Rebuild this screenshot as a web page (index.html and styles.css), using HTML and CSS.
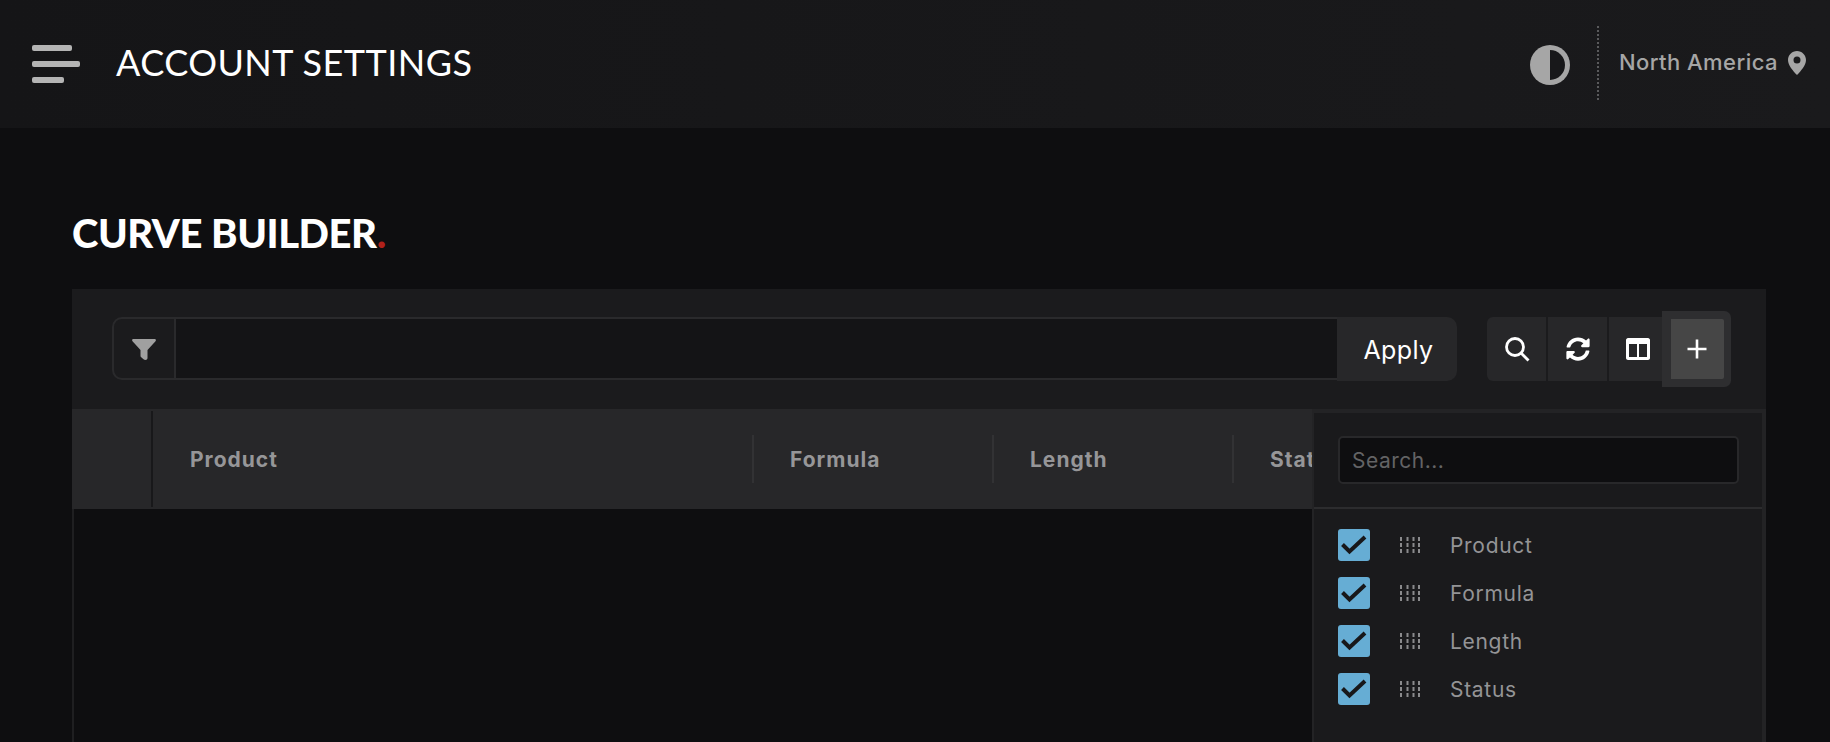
FILE: index.html
```html
<!DOCTYPE html>
<html lang="en">
<head>
    <meta charset="UTF-8">
    <title>Curve Builder</title>
    <link rel="stylesheet" href="styles.css">
</head>
<body>
    <svg class="defs" width="0" height="0">
        <symbol id="grip" viewBox="0 0 20 16">
            <path d="M1 0V16M7.5 0V16M13.5 0V16M19 0V16" stroke="#8a8a8c" stroke-width="2" stroke-dasharray="4 2" fill="none"/>
        </symbol>
        <symbol id="check" viewBox="0 0 32 32">
            <path d="M4.500 15.500L11.500 22.500L27 8" stroke="#18181a" stroke-width="4" fill="none"/>
        </symbol>
    </svg>

    <header class="topbar">
        <div class="topbar-left">
            <div class="menu-icon"><span></span><span></span><span></span></div>
            <div class="page-name">ACCOUNT SETTINGS</div>
        </div>
        <div class="topbar-right">
            <svg class="theme-icon" width="40" height="40" viewBox="0 0 40 40">
                <circle cx="20" cy="20" r="20" fill="#a6a6a6"/>
                <path d="M20 5A15 15 0 0 1 20 35Z" fill="#18181a"/>
            </svg>
            <div class="region">
                <span class="region-name">North America</span>
                <svg width="18" height="24" viewBox="0 0 18 24">
                    <path fill-rule="evenodd" fill="#a6a6a6" d="M9 0C4 0 0 4 0 9C0 14 5 20 9 24C13 20 18 14 18 9C18 4 14 0 9 0ZM9 5.500A3.500 3.500 0 1 1 9 12.500A3.500 3.500 0 1 1 9 5.500Z"/>
                </svg>
            </div>
        </div>
    </header>

    <main class="content">
        <h1 class="title">CURVE BUILDER<span class="dot">.</span></h1>

        <section class="card">
            <div class="toolbar">
                <div class="filter">
                    <div class="filter-icon">
                        <svg width="24" height="21" viewBox="0 0 24 21">
                            <path fill="#a0a0a0" d="M1.500 0H22.500C23.800 0 24.300 1.200 23.500 2.200L15.500 11V19C15.500 21 13 21.500 11.500 20.200L9.500 18.500C8.800 18 8.500 17.500 8.500 16.500V11L0.500 2.200C-0.300 1.200 0.200 0 1.500 0Z"/>
                        </svg>
                    </div>
                    <div class="filter-input"></div>
                    <button class="apply" type="button">Apply</button>
                </div>
                <div class="tools">
                    <button class="tool" type="button">
                        <svg width="26" height="26" viewBox="0 0 26 26">
                            <circle cx="11" cy="11" r="8.500" stroke="#fff" stroke-width="2.800" fill="none"/>
                            <path d="M17 17L24.500 24.500" stroke="#fff" stroke-width="2.800" fill="none"/>
                        </svg>
                    </button>
                    <button class="tool" type="button">
                        <svg width="24" height="24" viewBox="0 0 512 512">
                            <path fill="#fff" d="M370.72 133.28C339.458 104.008 298.888 87.962 255.848 88c-77.458.068-144.328 53.178-162.791 126.85-1.344 5.363-6.122 9.15-11.651 9.15H24.103c-7.498 0-13.194-6.807-11.807-14.176C33.933 94.924 134.813 8 256 8c66.448 0 126.791 26.136 171.315 68.685L463.03 40.97C478.149 25.851 504 36.559 504 57.941V192c0 13.255-10.745 24-24 24H345.941c-21.382 0-32.09-25.851-16.971-40.971l41.75-41.749zM32 296h134.059c21.382 0 32.09 25.851 16.971 40.971l-41.75 41.75c31.262 29.273 71.835 45.319 114.876 45.28 77.418-.07 144.315-53.144 162.787-126.849 1.344-5.363 6.122-9.15 11.651-9.150h57.304c7.498 0 13.194 6.807 11.807 14.176C478.067 417.076 377.187 504 256 504c-66.448 0-126.791-26.136-171.315-68.685L48.97 471.030C33.851 486.149 8 475.441 8 454.059V320c0-13.255 10.745-24 24-24z"/>
                        </svg>
                    </button>
                    <button class="tool tool-columns" type="button">
                        <svg width="24" height="22" viewBox="0 0 24 22">
                            <path fill-rule="evenodd" fill="#fff" d="M2 0H22C23 0 24 1 24 2V20C24 21 23 22 22 22H2C1 22 0 21 0 20V2C0 1 1 0 2 0ZM3 6V19H11V6ZM13 6V19H21V6Z"/>
                        </svg>
                    </button>
                    <button class="tool tool-active" type="button">
                        <svg width="20" height="20" viewBox="0 0 20 20">
                            <path d="M10 0.500V19.500M0.500 10H19.500" stroke="#fff" stroke-width="2.600" fill="none"/>
                        </svg>
                    </button>
                </div>
            </div>

            <div class="table">
                <div class="table-head">
                    <div class="col col-select"></div>
                    <div class="col col-product">Product</div>
                    <div class="col col-mid">Formula</div>
                    <div class="col col-mid">Length</div>
                    <div class="col col-mid">Status</div>
                </div>
                <div class="table-body"></div>

                <div class="columns-panel">
                    <div class="panel-search">
                        <input class="search-input" type="text" placeholder="Search...">
                    </div>
                    <ul class="column-list">
                        <li class="column-item">
                            <span class="checkbox"><svg width="32" height="32"><use href="#check"/></svg></span>
                            <svg class="grip" width="20" height="16"><use href="#grip"/></svg>
                            <span>Product</span>
                        </li>
                        <li class="column-item">
                            <span class="checkbox"><svg width="32" height="32"><use href="#check"/></svg></span>
                            <svg class="grip" width="20" height="16"><use href="#grip"/></svg>
                            <span>Formula</span>
                        </li>
                        <li class="column-item">
                            <span class="checkbox"><svg width="32" height="32"><use href="#check"/></svg></span>
                            <svg class="grip" width="20" height="16"><use href="#grip"/></svg>
                            <span>Length</span>
                        </li>
                        <li class="column-item">
                            <span class="checkbox"><svg width="32" height="32"><use href="#check"/></svg></span>
                            <svg class="grip" width="20" height="16"><use href="#grip"/></svg>
                            <span>Status</span>
                        </li>
                    </ul>
                </div>
            </div>
        </section>
    </main>
</body>
</html>
```

FILE: styles.css
```css
:root {
    --page-bg: #0e0e10;
    --panel-bg: #1a1a1c;
    --raised: #272729;
    --line: #2a2a2c;
    --muted: #a6a6a6;
    --blue: #66add4;
}
* {
    box-sizing: border-box;
}
html, body {
    height: 100%;
}
body {
    margin: 0;
    overflow: hidden;
    background-color: var(--page-bg);
    color: #fff;
    font-family: 'Inter', sans-serif;
}
.defs {
    position: absolute;
}
button {
    border: none;
    font-family: inherit;
    cursor: pointer;
}

/* top bar */
.topbar {
    display: flex;
    justify-content: space-between;
    align-items: center;
    height: 128px;
    padding: 0 24px 0 32px;
    background: linear-gradient(90deg, #151517, #1a1a1c);
}
.topbar-left {
    display: flex;
    align-items: center;
    gap: 36px;
}
.menu-icon {
    display: flex;
    flex-direction: column;
    gap: 10px;
    width: 48px;
}
.menu-icon span {
    display: block;
    height: 6px;
    width: 40px;
    border-radius: 2px;
    background-color: #b4b4b4;
}
.menu-icon span:nth-child(2) {
    width: 48px;
}
.menu-icon span:nth-child(3) {
    width: 32px;
}
.page-name {
    font-family: 'Lato', sans-serif;
    font-size: 36px;
    font-weight: 400;
    line-height: 1;
    letter-spacing: 0.45px;
    margin-top: -4px;
}
.topbar-right {
    display: flex;
    align-items: center;
}
.theme-icon {
    margin-top: 2px;
}
.region {
    display: flex;
    align-items: center;
    gap: 10px;
    height: 74px;
    margin-left: 27px;
    padding-left: 20px;
    border-left: 2px dotted #5a5a5c;
    margin-top: -2px;
    font-size: 22px;
    font-weight: 500;
    letter-spacing: 0.45px;
    color: var(--muted);
}
.region-name {
    margin-top: -2px;
}

/* page */
.content {
    padding: 81px 64px 0 72px;
}
.title {
    margin: 0 0 31px;
    font-family: 'Lato', sans-serif;
    font-size: 40px;
    font-weight: 900;
    line-height: 49px;
    letter-spacing: -0.45px;
}
.dot {
    color: #b0211b;
}
.card {
    background-color: #1b1b1d;
}
.toolbar {
    display: flex;
    justify-content: space-between;
    height: 120px;
    padding: 28px 42px 0 40px;
}

/* filter */
.filter {
    display: flex;
    width: 1345px;
    height: 64px;
    border-radius: 10px;
}
.filter-icon {
    display: flex;
    justify-content: center;
    align-items: center;
    width: 64px;
    height: 63px;
    border: 2px solid var(--line);
    border-radius: 10px 0 0 10px;
    padding-top: 2px;
}
.filter-input {
    flex: 1;
    height: 63px;
    background-color: #141416;
    border-top: 2px solid var(--line);
    border-bottom: 2px solid var(--line);
}
.apply {
    width: 120px;
    height: 64px;
    padding: 2px 0 0 3px;
    background-color: var(--raised);
    color: #fff;
    border-radius: 0 10px 10px 0;
    font-size: 25px;
    font-weight: 400;
    letter-spacing: 0.4px;
}

/* tool buttons */
.tools {
    display: flex;
    height: 64px;
    gap: 2px;
}
.tool {
    display: flex;
    justify-content: center;
    align-items: center;
    width: 59px;
    height: 64px;
    padding: 0;
    background-color: var(--raised);
}
.tool:first-child {
    border-radius: 6px 0 0 6px;
}
.tool-columns {
    padding-right: 2px;
}
.tool-active {
    width: 53px;
    height: 60px;
    margin: 2px 0 0 1px;
    padding-right: 2px;
    background-color: #464646;
    border-radius: 0 2px 2px 0;
    box-shadow: -1px 0 0 8px #2e2e30;
}

/* table */
.table {
    position: relative;
}
.table-head {
    display: flex;
    align-items: center;
    height: 100px;
    background-color: var(--raised);
    color: #969698;
    font-size: 21px;
    font-weight: 700;
    letter-spacing: 1px;
}
.col {
    display: flex;
    align-items: center;
    padding-left: 37px;
    height: 48px;
    border-right: 2px solid #323234;
}
.col-select {
    width: 81px;
    height: 96px;
    padding: 0;
    border-right: 2px solid #18181a;
}
.col-product {
    width: 601px;
}
.col-mid {
    width: 240px;
    padding-left: 36px;
}
.col-mid:last-child {
    border-right: none;
}
.table-body {
    height: 300px;
    background-color: var(--page-bg);
    border-left: 2px solid #1f1f21;
}

/* column chooser */
.columns-panel {
    position: absolute;
    top: 0;
    right: 0;
    width: 454px;
    height: 340px;
    background-color: var(--panel-bg);
    border: 4px solid #232325;
    border-width: 4px 4px 0 2px;
}
.panel-search {
    height: 96px;
    padding: 23px 23px 0 24px;
    border-bottom: 2px solid #2c2c2e;
}
.search-input {
    width: 100%;
    height: 48px;
    padding: 0 12px;
    background-color: #0e0e10;
    border: 2px solid #28282a;
    border-radius: 5px;
    color: #fff;
    font-family: inherit;
    font-size: 21px;
    letter-spacing: 0.5px;
}
.search-input::placeholder {
    color: #636365;
    opacity: 1;
}
.column-list {
    list-style: none;
    margin: 0;
    padding: 20px 0 0 24px;
}
.column-item {
    display: flex;
    align-items: center;
    height: 32px;
    margin-bottom: 16px;
    font-size: 21px;
    letter-spacing: 0.7px;
    color: #949496;
}
.checkbox {
    display: block;
    width: 32px;
    height: 32px;
    border-radius: 3px;
    background-color: var(--blue);
}
.grip {
    margin: 0 30px 0 30px;
}
```
